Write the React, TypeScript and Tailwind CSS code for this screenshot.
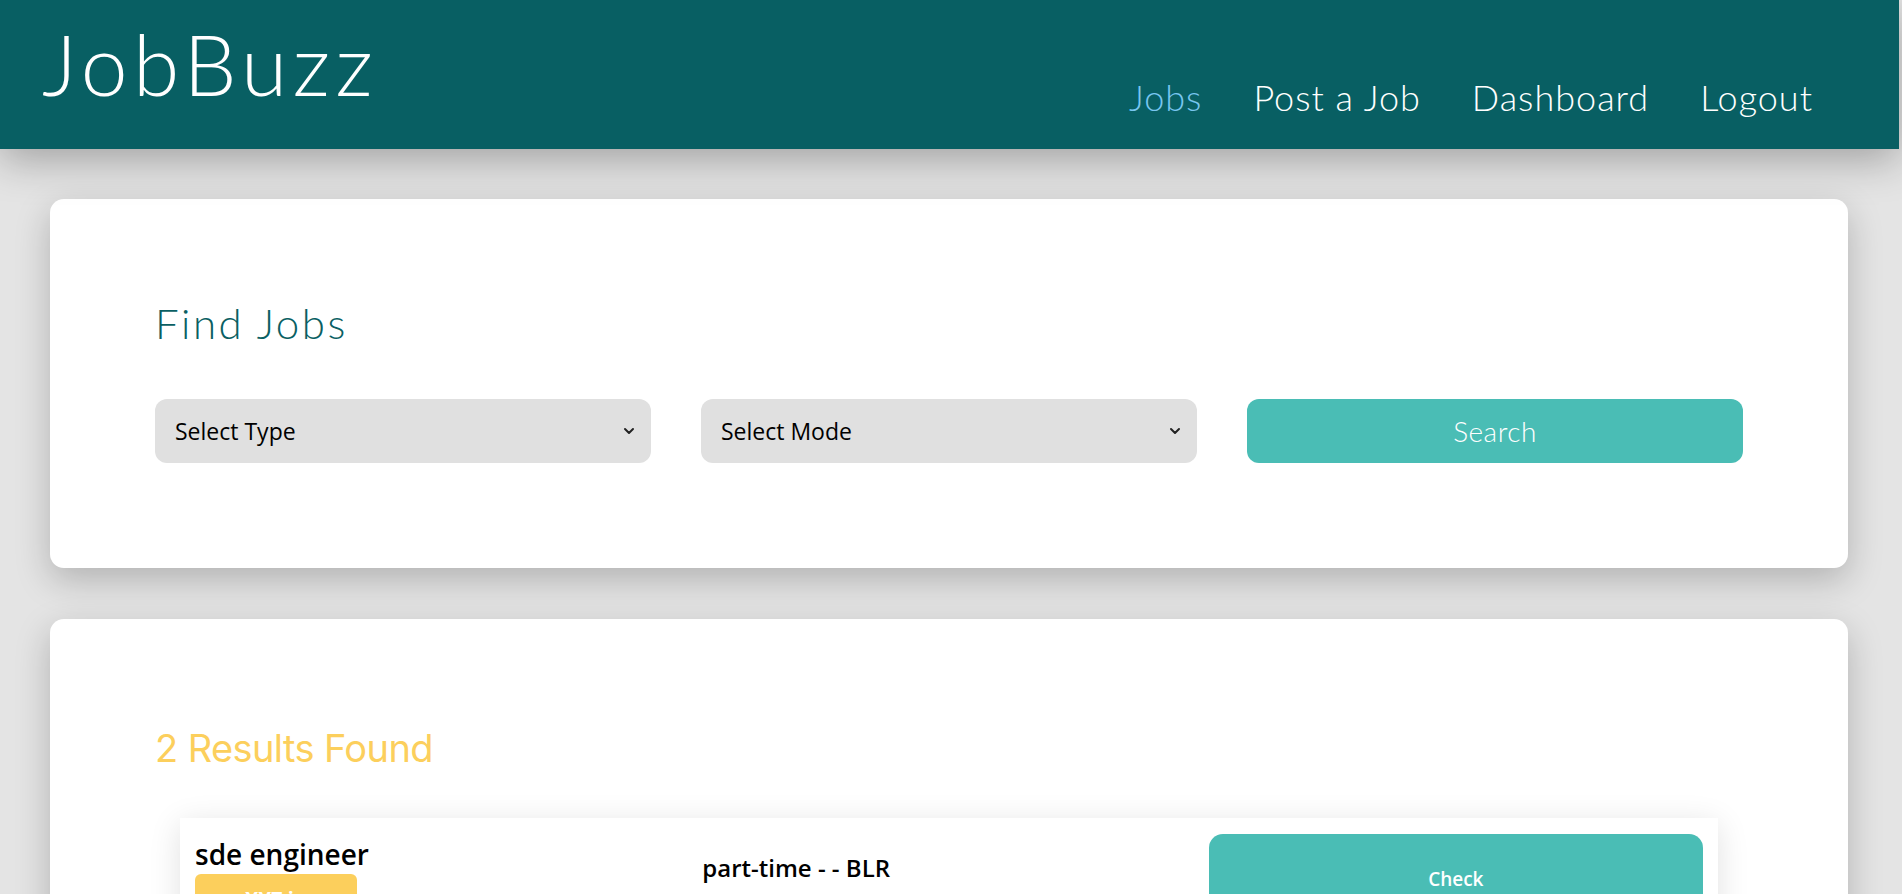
import { ChevronDown } from 'lucide-react';

const navLinks = [
  { label: 'Jobs', active: true },
  { label: 'Post a Job', active: false },
  { label: 'Dashboard', active: false },
  { label: 'Logout', active: false },
];

const results = [
  { title: 'sde engineer', company: 'XYZ in', meta: 'part-time - - BLR' },
  { title: 'frontend developer', company: 'ABC Ltd', meta: 'full-time - - Remote' },
];

const roundFont = "font-['Lato','Noto_Sans',sans-serif]";
const uiFont = "font-['Open_Sans','Noto_Sans',sans-serif]";

const SelectBox = ({ label }: { label: string }) => (
  <div className={`flex h-[64px] items-center justify-between rounded-[12px] bg-[#e0e0e0] pl-[20px] pr-[14px] text-[23px] text-black ${uiFont}`}>
    <span>{label}</span>
    <ChevronDown size={16} strokeWidth={3} className="text-[#222]" />
  </div>
);

const ResultCard = ({ item }: { item: typeof results[0] }) => (
  <div className="grid grid-cols-3 gap-[8px] bg-white px-[15px] pt-[16px] pb-[20px] shadow-[0_6px_30px_rgba(0,0,0,0.12)]">
    <div className={uiFont}>
      <h3 className="text-[28px] font-semibold leading-[40px] text-black">{item.title}</h3>
      <div className="w-[162px] rounded-[6px] bg-[#fccf5c] py-[10px] text-center text-[20px] font-bold text-white">
        {item.company}
      </div>
    </div>
    <div className={`pt-[18px] pl-[2px] text-[24px] font-semibold leading-[32px] text-black ${uiFont}`}>
      {item.meta}
    </div>
    <div className="pl-[3px]">
      <button className={`h-[90px] w-full rounded-[14px] bg-[#4abdb5] text-[19px] font-semibold text-white ${uiFont}`}>
        Check
      </button>
    </div>
  </div>
);

export default function App() {
  return (
    <div className="min-h-screen bg-[#e4e4e4] pb-[60px]">
      <header className="relative z-10 flex h-[149px] w-[1899px] items-start justify-between bg-[#085f63] pl-[42px] pr-[86px] shadow-[0_10px_40px_rgba(0,0,0,0.3)]">
        <h1 className={`mt-[22px] text-[84px] font-light leading-none tracking-[5.5px] text-white ${roundFont}`}>JobBuzz</h1>
        <nav className={`mt-[70px] flex gap-[51px] text-[36px] font-light tracking-[1px] ${roundFont}`}>
          {navLinks.map((link) => (
            <a key={link.label} href="#" className={link.active ? 'text-[#78c6f0]' : 'text-white'}>
              {link.label}
            </a>
          ))}
        </nav>
      </header>

      <main className="flex flex-col gap-[51px] pt-[50px] pl-[50px] pr-[54px]">
        <section className="rounded-[14px] bg-white px-[105px] pt-[100px] pb-[105px] shadow-[0_12px_35px_rgba(0,0,0,0.22)]">
          <h2 className={`text-[42px] font-light leading-[48px] tracking-[2.5px] text-[#0a5f63] ${roundFont}`}>Find Jobs</h2>
          <div className="mt-[52px] grid grid-cols-3 gap-[50px]">
            <SelectBox label="Select Type" />
            <SelectBox label="Select Mode" />
            <button className={`h-[64px] rounded-[12px] bg-[#4abdb5] text-[28px] font-light tracking-[0.5px] text-white ${roundFont}`}>Search</button>
          </div>
        </section>

        <section className="rounded-[14px] bg-white px-[105px] pt-[105px] pb-[105px] shadow-[0_12px_35px_rgba(0,0,0,0.22)]">
          <h2 className="font-['Inter',sans-serif] text-[38px] leading-[48px] tracking-[-0.6px] text-[#fccf5c]">
            {results.length} Results Found
          </h2>
          <div className="mt-[46px] flex flex-col gap-[30px] px-[25px]">
            {results.map((item, i) => (
              <ResultCard key={i} item={item} />
            ))}
          </div>
        </section>
      </main>
    </div>
  );
}
